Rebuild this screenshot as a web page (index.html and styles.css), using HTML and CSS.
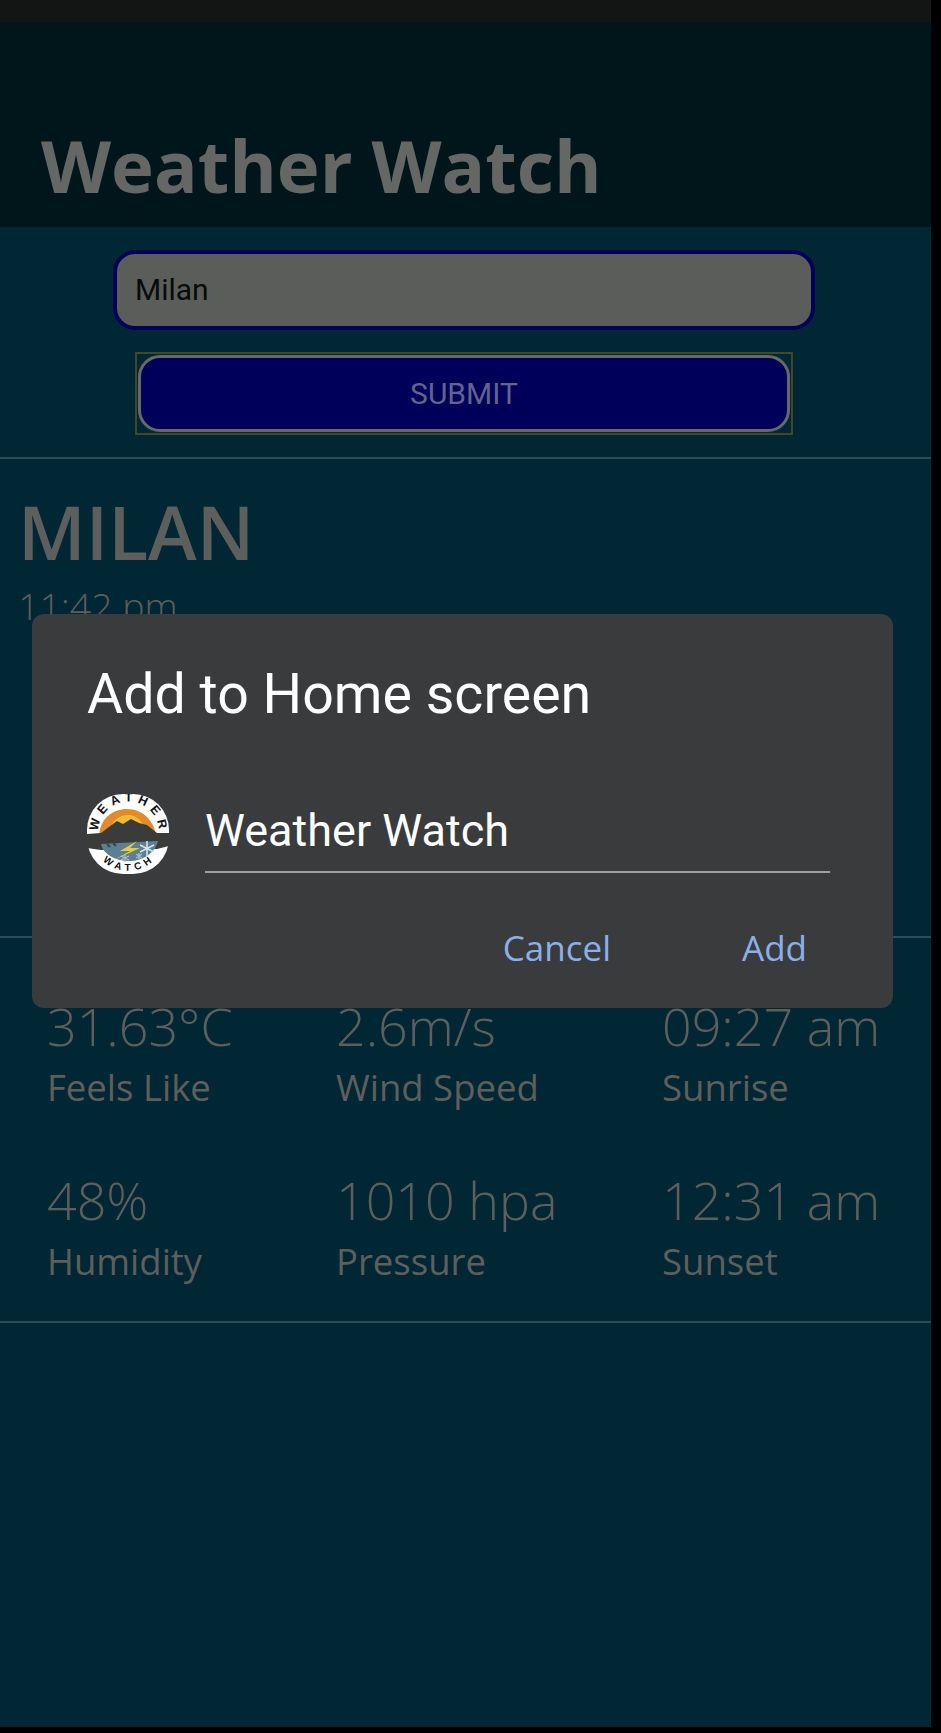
FILE: index.html
```html
<!DOCTYPE html>
<html lang="en">
<head>
<meta charset="utf-8">
<title>Weather Watch</title>
<link rel="stylesheet" href="styles.css">
</head>
<body>
<div class="screen">
  <div class="statusbar"></div>
  <header class="header"><h1 class="title">Weather Watch</h1></header>
  <form class="search">
    <div class="input">Milan</div>
    <div class="submit-wrap"><div class="submit">SUBMIT</div></div>
  </form>
  <section class="current">
    <h2 class="city">MILAN</h2>
    <p class="time">11:42 pm</p>
  </section>
  <section class="stats">
    <div class="stat"><div class="value">31.63°C</div><div class="label">Feels Like</div></div>
    <div class="stat"><div class="value">2.6m/s</div><div class="label">Wind Speed</div></div>
    <div class="stat"><div class="value">09:27 am</div><div class="label">Sunrise</div></div>
    <div class="stat"><div class="value">48%</div><div class="label">Humidity</div></div>
    <div class="stat"><div class="value">1010 hpa</div><div class="label">Pressure</div></div>
    <div class="stat"><div class="value">12:31 am</div><div class="label">Sunset</div></div>
  </section>
</div>
<div class="dialog">
  <div class="dialog-title">Add to Home screen</div>
  <div class="dialog-row">
    <svg class="logo" viewBox="0 0 82 80" aria-hidden="true">
      <defs>
        <path id="arcTop" d="M11 38 A30.5 30.5 0 0 1 72 38"/>
        <path id="arcBot" d="M13 64 A37 37 0 0 0 69 64"/>
      </defs>
      <rect x="0" y="0" width="82" height="80" rx="36" fill="#fff"/>
      <path d="M12 42 C13 24 26 15 40 15 C55 15 67 26 69 42 Z" fill="#e58a2a"/>
      <path d="M23 37 C24 27 32 21 41 21 C50 21 57 28 58 37 Z" fill="#eebd34"/>
      <path d="M0 40 L14 39 L22 33 L30 27 L36 30 L44 25 L52 29 L60 31 L70 39 L82 39 L82 52 L70 55 L14 56 L0 54 Z" fill="#3b3c3a"/>
      <path d="M14 50 L71 47 C68 59 56 67 42 67 C28 67 16 60 14 50 Z" fill="#5d7f92"/>
      <path d="M50 47 L33 57 L43 57 L25 67 L53 54 L43 54 Z" fill="#ecca38"/>
      <path d="M60 47 V62 M53 51 L67 58 M67 51 L53 58" stroke="#d4e2ea" stroke-width="1.6"/>
      <path d="M38 60 V68 M34 62 L42 66 M42 62 L34 66 M52 59 V65 M49 60 L55 64 M55 60 L49 64" stroke="#a9c2d0" stroke-width="1.2"/>
      <path d="M20 50 L23 53 M26 49 L29 52" stroke="#2d4a5c" stroke-width="2"/>
      <text class="logo-text"><textPath href="#arcTop" startOffset="1%" textLength="92">WEATHER</textPath></text>
      <text class="logo-text small"><textPath href="#arcBot" startOffset="6%" textLength="54">WATCH</textPath></text>
    </svg>
    <div class="field">Weather Watch</div>
  </div>
  <div class="actions">
    <span class="action">Cancel</span>
    <span class="action">Add</span>
  </div>
</div>
</body>
</html>
```
FILE: styles.css
```css
* { box-sizing: border-box; }
html, body { margin: 0; padding: 0; }
body {
  position: relative;
  width: 941px;
  height: 1733px;
  background: #000;
  overflow: hidden;
  font-family: "Open Sans", "Noto Sans", sans-serif;
  color: #5c5f5c;
}
.screen {
  width: 931px;
  height: 1727px;
  background: #012634;
  display: flex;
  flex-direction: column;
}
.statusbar { height: 22px; background: #121514; flex: none; }
.header {
  height: 205px;
  flex: none;
  background: #00161b;
  display: flex;
  align-items: flex-end;
  padding: 0 0 14px 41px;
}
.title {
  margin: 0;
  font-size: 72.5px;
  line-height: 96px;
  font-weight: 700;
  color: #646764;
}
.search {
  flex: none;
  height: 232px;
  padding: 23px 3px 0 0;
  border-bottom: 2px solid #2b4d56;
  display: flex;
  flex-direction: column;
  align-items: center;
}
.input {
  width: 702px;
  height: 80px;
  border: 4px solid #00005a;
  border-radius: 22px;
  background: #5b5d5b;
  color: #0a0a0a;
  font-family: Roboto, sans-serif;
  font-size: 30px;
  line-height: 72px;
  padding-left: 18px;
}
.submit-wrap {
  margin-top: 22px;
  width: 658px;
  height: 83px;
  border: 2px solid #3f4a25;
  padding: 1px;
}
.submit {
  height: 100%;
  border: 3px solid #66686a;
  border-radius: 22px;
  background: #00005a;
  color: #62648a;
  font-family: Roboto, sans-serif;
  font-size: 30px;
  line-height: 72px;
  text-align: center;
}
.current {
  flex: none;
  height: 479px;
  padding: 24px 0 0 18px;
  border-bottom: 2px solid #2b4d56;
}
.city {
  margin: 0;
  font-size: 73.5px;
  line-height: 98px;
  font-weight: 600;
  color: #5c5f5c;
}
.time {
  margin: 0;
  font-size: 37.5px;
  line-height: 50px;
  font-weight: 300;
}
.stats {
  flex: none;
  height: 385px;
  padding: 53px 0 0 47px;
  border-bottom: 2px solid #2b4d56;
  display: grid;
  grid-template-columns: 289px 326px 268px;
  grid-auto-rows: 174px;
  align-content: start;
}
.value { font-size: 52px; line-height: 70px; font-weight: 300; white-space: nowrap; }
.label { font-size: 36.5px; line-height: 46px; margin-top: 3px; white-space: nowrap; }
.dialog {
  position: absolute;
  left: 32px;
  top: 614px;
  width: 861px;
  height: 394px;
  background: #3a3b3d;
  border-radius: 12px;
  padding: 47px 63px 0 55px;
  font-family: Roboto, sans-serif;
  color: #fff;
}
.dialog-title { font-size: 55.5px; line-height: 68px; }
.dialog-row {
  display: flex;
  align-items: flex-start;
  margin-top: 65px;
}
.logo { width: 82px; height: 80px; flex: none; }
.logo-text {
  font-family: "Liberation Sans", sans-serif;
  font-weight: 700;
  font-size: 12.5px;
  fill: #111;
}
.logo-text.small { font-size: 10px; }
.field {
  margin-left: 36px;
  flex: 1;
  height: 79px;
  border-bottom: 2px solid #9ea0a2;
  font-size: 45px;
  line-height: 74px;
}
.actions {
  display: flex;
  justify-content: flex-end;
  gap: 131px;
  margin-top: 51px;
  padding-right: 23px;
}
.action {
  font-family: "Open Sans", sans-serif;
  font-size: 35px;
  font-weight: 500;
  line-height: 46px;
  color: #8ab0ea;
}
```
